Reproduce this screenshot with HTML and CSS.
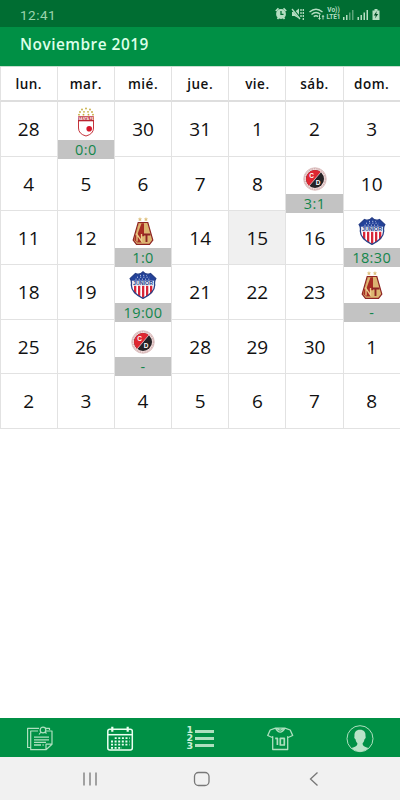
FILE: index.html
```
<!DOCTYPE html>
<html lang="es">
<head>
<meta charset="utf-8">
<title>Noviembre 2019</title>
<link rel="stylesheet" href="styles.css">
</head>
<body>
<div class="status">
  <span class="clock">12:41</span>
  <span class="status-icons">
  <svg viewBox="0 0 50 16" width="50" height="16">
    <g fill="none" stroke="#b5dec2" stroke-width="1.300">
      <path d="M.8 5 3.500 2.300M11.200 5 8.500 2.300M2.500 13l1-1.300M9.500 13l-1-1.300" stroke-width="1.700"/>
      <circle cx="6" cy="8" r="4.900" fill="#b5dec2" stroke="none"/>
      <path d="M6 5v3.300h2.500" stroke="#006d32"/>
      <path d="M17 6h2.500L24 2.500v10L19.500 10H17z" fill="#b5dec2" stroke="none"/>
      <path d="m17 2.500 9 10.500" stroke="#006d32" stroke-width="2.300"/><path d="m17 3 8 10"/>
      <path d="M26 3v9M28.300 3v11" stroke-dasharray="2 1"/>
      <path d="M34.500 6q6.500-5.500 13 0M36.500 8.500q4.500-4 9 0M38.700 10.600q2.300-1.800 4.500 0" stroke-width="1.400"/>
      <path d="M44.500 9v4M48 13.500V9.500" stroke-width="1"/>
      <path d="m43 12 1.500 2 1.500-2zM46.500 10.800 48 9l1.500 1.800z" fill="#b5dec2" stroke="none"/>
    </g>
  </svg>
  <span class="volte"><span>Vo))</span><span>LTE1</span></span>
  <svg viewBox="67 0 43 16" width="43" height="16">
    <g fill="#b5dec2"><path d="M68 11h1.500v3H68zM71 9h1.500v5H71zM82.500 11H84v3h-1.500zM85.500 9H87v5h-1.500zM88.500 6.500H90V14h-1.500zM91.500 4H93v10h-1.500z"/><path d="M74 6.500h1.500V14H74zM77 4h1.500v10H77z" opacity=".5"/>
    <path d="M97.500 4.500h2V3h3v1.500h2V14h-7z"/></g>
    <path d="m101.800 5-3 4.500h2l-.8 3 3.200-4.500h-2z" fill="#004d24"/>
  </svg>
  </span>
</div>
<header class="title">Noviembre 2019</header>

<main class="calendar" id="calendar">
  <div class="week names"><span>lun.</span><span>mar.</span><span>mié.</span><span>jue.</span><span>vie.</span><span>sáb.</span><span>dom.</span></div>
</main>

<nav class="tabs">
  <svg viewBox="0 0 28 28" fill="none" stroke="#aee0bf" stroke-width="1.200">
    <path d="M4.500 22.500H1.600V3.300H13M19 3.300h4.500V5M12 6H4.700v18.700H20l6-5.500V6h-6M20 24.700v-5.500h6" stroke-linejoin="round"/>
    <circle cx="17" cy="5" r="2.800"/><path d="m15 7-2 2.500M19 7l1.500 1.500"/>
    <path d="M8 12.200h15M8 14.800h15M8 17.400h12M8 20h7M16.500 20h1.200" stroke-width="1.300"/>
  </svg>
  <svg viewBox="0 0 28 28" fill="none" stroke="#eafff1" stroke-width="1.500">
    <rect x="1.800" y="4.300" width="24.500" height="20.700" rx="2"/><path d="M2 9.700h24"/>
    <path d="M6.300 1.700v5M21.700 1.700v5" stroke-width="2.200"/>
    <path d="M8.700 13.200h15M5 16.500h18.500M5 19.700h18.500M5 22.800h11" stroke-width="1.800" stroke-dasharray="2 1.600"/>
  </svg>
  <div class="list-icon">
    <div class="list-numbers"><span>1</span><span>2</span><span>3</span></div>
    <svg viewBox="0 0 19 28"><path d="M0 6.500h19M0 13.500h19M0 20.500h19" stroke="#aee0bf" stroke-width="3"/></svg>
  </div>
  <svg viewBox="0 0 28 28" fill="none" stroke="#aee0bf" stroke-width="1.300" stroke-linejoin="round">
    <path d="M9.500 3.200 4.200 5 1.700 10.500l4.600 2 .4-.8V24.500h15V11.700l.4.800 4.600-2L24.200 5l-5.300-1.800h-9.400zM9.500 3.200q4.700 8 9.400 0M11 3.200q3.200 4 6.400 0"/>
    <path d="M9.200 13.300h2.200V20M14.300 13.300h4V20h-4z" stroke-width="1.700"/>
  </svg>
  <svg viewBox="0 0 28 28">
    <circle cx="14" cy="13.700" r="13" fill="none" stroke="#aee0bf"/>
    <path d="M14 4.700c-4 0-5.900 2.500-5.500 6.500-.7.700.2 2.800 1 3 .3 2 1 3 1.900 4-.2 3-1 3-5.900 4.800 4.500 4.600 12.500 4.600 17 0-4.900-1.800-5.700-1.800-5.900-4.800.9-1 1.600-2 1.900-4 .8-.2 1.700-2.300 1-3 .4-4-1.500-6.500-5.500-6.500z" fill="#b9e3c7"/>
  </svg>
</nav>
<footer class="system">
  <svg viewBox="0 0 400 43" width="400" height="43" fill="none" stroke="#777" stroke-width="1.300">
    <path d="M84 15.500v13M90 15.500v13M96 15.500v13"/><rect x="194.500" y="15.500" width="14.500" height="13" rx="4"/><path d="m317.500 15.500-7 6.500 7 6.500"/>
  </svg>
</footer>
<script src="calendar.js"></script>
</body>
</html>
```
FILE: calendar.js
```
const crests = {
  santafe: `<svg class="crest santafe" viewBox="0 0 20 30">
    <g fill="#c5ac3e"><circle cx="6" cy="2.500" r=".9"/><circle cx="10" cy="1.500" r=".9"/><circle cx="14" cy="2.500" r=".9"/><circle cx="4" cy="5" r=".9"/><circle cx="8" cy="4.800" r=".9"/><circle cx="12" cy="4.800" r=".9"/><circle cx="16" cy="5" r=".9"/><circle cx="3" cy="7.700" r=".9"/><circle cx="7.500" cy="7.700" r=".9"/><circle cx="12.500" cy="7.700" r=".9"/><circle cx="17" cy="7.700" r=".9"/></g>
    <path d="M2.500 10h15v11q0 6-7.500 8-7.500-2-7.500-8z" fill="#fff" stroke="#c5343c"/>
    <path d="M2 9.500h16v4.800H2z" fill="#b92530"/>
    <text x="10" y="13.200" class="crest-text" font-size="3.200">SANTA FE</text>
    <circle cx="13.200" cy="21.800" r="2.800" fill="#d5172a"/></svg>`,
  cucuta: `<svg class="crest cucuta" viewBox="0 0 24 24">
    <circle cx="12" cy="12" r="11.300" fill="#f5dfdf" stroke="#c9a5a5" stroke-width=".6"/>
    <circle cx="12" cy="12" r="10.200" fill="none" stroke="#a98686" stroke-width=".9" stroke-dasharray=".8 1"/>
    <circle cx="12" cy="12" r="9" fill="#252326"/>
    <path d="M6.200 18.900A9 9 0 0 1 17.800 5.100z" fill="#df2731"/>
    <path d="M6.200 18.900 17.800 5.100" stroke="#f5dfdf" stroke-width=".7"/>
    <text x="8.700" y="11" class="crest-text" font-size="6.500">C</text>
    <text x="15" y="18" class="crest-text" font-size="6.500">D</text></svg>`,
  tolima: `<svg class="crest tolima" viewBox="0 0 22 28">
    <path d="m8 0 .6 1.400 1.500.1L9 2.600l.3 1.600-1.300-.8-1.400.8.300-1.600-1.100-1.100 1.500-.1zM14 0l.6 1.400 1.500.1L15 2.600l.3 1.600-1.300-.8-1.400.8.300-1.600-1.100-1.100 1.500-.1z" fill="#dec07f"/>
    <path d="M6.200 5.500h9.600L20.800 23l-3.300 4.300h-13L1.200 23z" fill="#dcb571" stroke="#8e2524" stroke-width="1.200"/>
    <path d="M6.600 6.200H12v13H3.200z" fill="#a72d24"/>
    <path d="M6.800 6.200h2.700L5 18.500H3.500z" fill="#dcb571"/>
    <path d="M3.200 18.500 9 17l1 8.500H5L2.300 23z" fill="#a72d24"/>
    <path d="M5 24.500v-7.200l4.500 6.700v-7" fill="none" stroke="#edce8d" stroke-width="1.300"/>
    <path d="M11 17.500h7.500M14.500 17.500v7.500" fill="none" stroke="#8e2524" stroke-width="1.900"/></svg>`,
  junior: `<svg class="crest junior" viewBox="0 0 28 28">
    <path d="M14 .8Q11 4.500 6.500 2.500L1.200 7.500Q3 10 2.300 14 2.500 22 14 27.300 25.500 22 25.700 14 25 10 26.800 7.500L21.500 2.500Q17 4.500 14 .8z" fill="#fff"/>
    <path d="M5 14.500v7.300l2.300 1.800v-9.100zM9 14.500v10l2.300 1.200V14.500zM13 14.500v12l1 .6 1.300-.6v-12zM17 14.500v11.200l2.300-1.200v-10zM21 14.500v8.900l2.300-2v-6.900z" fill="#d72638"/>
    <path d="M14 .8Q11 4.500 6.500 2.500L1.200 7.500l1 2.500h23.600l1-2.500-5.300-5Q17 4.500 14 .8z" fill="#23429a"/>
    <path d="M8 6.200h13M11 4.300h7M6.500 8.200h16" stroke="#e6ebf8" stroke-width=".9" stroke-dasharray="1 2.200"/>
    <path d="M2.500 9.700h23v5h-23z" fill="#e9edf8"/>
    <text x="14" y="14.200" font-size="5.600" textLength="20" lengthAdjust="spacingAndGlyphs" class="crest-text navy">JUNIOR</text>
    <path d="M14 .8Q11 4.500 6.500 2.500L1.200 7.500Q3 10 2.300 14 2.500 22 14 27.300 25.500 22 25.700 14 25 10 26.800 7.500L21.500 2.500Q17 4.500 14 .8z" fill="none" stroke="#273f87" stroke-width="1.300"/></svg>`
};

const weeks = [
  [28, ["santafe", "0:0"], 30, 31, 1, 2, 3],
  [4, 5, 6, 7, 8, ["cucuta", "3:1"], 10],
  [11, 12, ["tolima", "1:0"], 14, 15, 16, ["junior", "18:30"]],
  [18, 19, ["junior", "19:00"], 21, 22, 23, ["tolima", "-"]],
  [25, 26, ["cucuta", "-"], 28, 29, 30, 1],
  [2, 3, 4, 5, 6, 7, 8]
];

const calendar = document.getElementById("calendar");
for (const week of weeks) {
  const row = document.createElement("div");
  row.className = "week";
  row.innerHTML = week.map(day => Array.isArray(day)
    ? `<div class="day match">${crests[day[0]]}<b>${day[1]}</b></div>`
    : `<div class="day${day === 15 ? " today" : ""}">${day}</div>`).join("");
  calendar.append(row);
}
```
FILE: styles.css
```
* { box-sizing: border-box; }
body { margin: 0; width: 400px; height: 800px; display: flex; flex-direction: column; overflow: hidden; background: #fff; font-family: "Open Sans", "Noto Sans", sans-serif; color: #111; }
.status { height: 27px; flex: none; background: #006d32; display: flex; align-items: center; justify-content: space-between; padding: 1px 15px 0 20px; }
.clock { font: 13.5px Roboto, sans-serif; letter-spacing: .5px; color: #9bd4ad; padding-top: 1px; }
.status-icons { display: flex; align-items: center; }
.volte { display: flex; flex-direction: column; align-items: center; width: 17px; font: 700 6.5px/7px Roboto, sans-serif; color: #b5dec2; }
.title { height: 39px; flex: none; background: #009045; color: #dcffe8; font-size: 15.4px; font-weight: 600; line-height: 35px; letter-spacing: .5px; padding-left: 20px; }
.calendar { flex: 1; width: 400.2px; margin-left: -.4px; }
.week { height: 54.4px; display: grid; grid-template-columns: repeat(7, 1fr); border-bottom: 1px solid #e2e2e2; }
.names { height: 36.2px; border-bottom: 2px solid #dedede; border-top: 1px solid #c7dfd0; font-size: 13.5px; font-weight: 600; line-height: 34px; letter-spacing: .5px; }
.names span { text-align: center; border-left: 1px solid #e2e2e2; }
.day { height: 53.4px; border-left: 1px solid #e2e2e2; text-align: center; font-size: 19px; line-height: 54px; letter-spacing: 0; }
.today { background: #f0f0f0; }
.match { display: flex; flex-direction: column; align-items: center; }
.match b { width: 100%; height: 19px; flex: none; margin: auto 0 -3px; background: #c3c3c3; color: #14864c; font-size: 14.5px; font-weight: 400; line-height: 19px; letter-spacing: .4px; z-index: 1; }
.crest { display: block; flex: none; }
.crest-text { font-family: "Liberation Sans", sans-serif; font-weight: 700; fill: #fff; text-anchor: middle; }
.navy { fill: #273f87; }
.santafe { width: 20px; height: 30px; margin-top: 5px; }
.cucuta { width: 24px; height: 24px; margin-top: 10px; }
.tolima { width: 22px; height: 28px; margin-top: 6px; }
.junior { width: 28px; height: 28px; margin-top: 6px; }
.tabs { height: 39px; flex: none; background: #009045; display: grid; grid-template-columns: repeat(5, 1fr); justify-items: center; align-items: center; }
.tabs > svg { width: 28px; height: 28px; margin-top: 2px; }
.list-icon { display: flex; width: 27px; height: 28px; margin-top: 2px; }
.list-icon svg { width: 19px; height: 28px; }
.list-numbers { width: 8px; display: flex; flex-direction: column; font: 700 9.5px/8.4px "DejaVu Sans", sans-serif; color: #c9efd5; padding-top: 1px; }
.system { height: 43px; flex: none; background: #f1f1f1; }
.system svg { display: block; }
```
